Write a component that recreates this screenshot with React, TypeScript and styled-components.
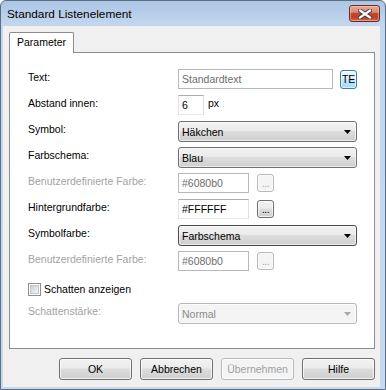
import styled, { createGlobalStyle } from "styled-components";

const GlobalStyle = createGlobalStyle`
    html, body {
        margin: 0;
        padding: 0;
        background: #ffffff;
    }
    * {
        box-sizing: border-box;
    }
`

const UI_FONT = `"Liberation Sans", Arial, sans-serif`

const Window = styled.div`
    width: 386px;
    height: 390px;
    display: flex;
    flex-direction: column;
    border: 1px solid #5b6e86;
    border-radius: 6px 6px 0 0;
    padding: 0 5px 2px 2px;
    background: linear-gradient(to bottom, #abc5e4 0px, #c3d7ee 24px, #c6d9ef 100%);
    font-family: ${UI_FONT};
    overflow: hidden;
`

const TitleBar = styled.div`
    height: 25px;
    flex-shrink: 0;
    display: flex;
    align-items: flex-start;
    justify-content: space-between;
    padding-left: 4px;
`

const Title = styled.div`
    margin-top: 5px;
    font-size: 11.8px;
    line-height: 16px;
    color: #000000;
`

const CloseButton = styled.div`
    width: 31px;
    height: 17px;
    margin-top: 4px;
    border: 1px solid #6e2a20;
    border-radius: 3px;
    background: linear-gradient(to bottom, #e8ab97 0%, #d98672 42%, #c5482e 50%, #bd3f27 75%, #d2694a 100%);
    box-shadow: inset 0 0 0 1px rgba(255, 220, 210, 0.45);
    display: flex;
    align-items: center;
    justify-content: center;
`

const Client = styled.div`
    flex: 1;
    display: flex;
    flex-direction: column;
    background: #f0f0f0;
    padding: 6px 5px 7px 6px;
`

const TabStrip = styled.div`
    display: flex;
    height: 20px;
`

const Tab = styled.div`
    position: relative;
    z-index: 1;
    height: 21px;
    padding: 0 7px;
    border: 1px solid #898c95;
    border-bottom: none;
    border-radius: 2px 2px 0 0;
    background: #ffffff;
    font-size: 10.5px;
    line-height: 19px;
    color: #000000;
`

const TabPanel = styled.div`
    height: 297px;
    border: 1px solid #898c95;
    background: #ffffff;
    padding: 16px 17px 0 18px;
`

const FormGrid = styled.div`
    display: grid;
    grid-template-columns: 150px 179px;
    grid-auto-rows: 20px;
    row-gap: 6px;
`

const Label = styled.div<{ $disabled?: boolean }>`
    align-self: start;
    padding-top: 2px;
    font-size: 10.5px;
    line-height: 13px;
    white-space: nowrap;
    color: ${p => (p.$disabled ? "#a3a3a3" : "#000000")};
`

const FieldRow = styled.div<{ $gap: number }>`
    display: flex;
    align-items: flex-start;
    gap: ${p => p.$gap}px;
`

const TextBox = styled.div<{ $width: number; $disabled?: boolean }>`
    width: ${p => p.$width}px;
    height: 20px;
    border: 1px solid;
    border-color: ${p => (p.$disabled ? "#b5b9bd" : "#abadb3 #dbdfe6 #e3e9ef #e2e3ea")};
    background: #ffffff;
    padding-left: 3px;
    font-size: 10.5px;
    line-height: 18px;
    white-space: nowrap;
    overflow: hidden;
    color: ${p => (p.$disabled ? "#6d6d6d" : "#000000")};
`

const Unit = styled.div`
    padding-top: 2px;
    font-size: 10.5px;
    line-height: 13px;
    color: #000000;
`

const SmallButton = styled.div<{ $disabled?: boolean }>`
    width: 17px;
    height: 18px;
    margin-top: 1px;
    border: 1px solid ${p => (p.$disabled ? "#b5b9bd" : "#707070")};
    border-radius: 3px;
    background: ${p =>
        p.$disabled
            ? "#f4f4f4"
            : "linear-gradient(to bottom, #f2f2f2 0%, #ebebeb 45%, #dddddd 50%, #cfcfcf 100%)"};
    box-shadow: inset 0 0 0 1px rgba(255, 255, 255, 0.7);
    font-size: 10px;
    line-height: 17px;
    text-align: center;
    letter-spacing: -0.5px;
    color: ${p => (p.$disabled ? "#a0a0a0" : "#000000")};
`

const TEButton = styled.div`
    width: 17px;
    height: 19px;
    margin-top: 1px;
    border: 1px solid #3c7fb1;
    border-radius: 3px;
    background: linear-gradient(to bottom, #eaf6fd 0%, #d9f0fc 45%, #bee6fd 50%, #a7d9f5 100%);
    box-shadow: inset 0 0 0 1px rgba(255, 255, 255, 0.6);
    font-size: 10.5px;
    line-height: 17px;
    text-align: center;
    letter-spacing: -0.3px;
    color: #000000;
`

const Select = styled.div<{ $disabled?: boolean; $focused?: boolean }>`
    height: 21px;
    display: flex;
    align-items: center;
    justify-content: space-between;
    padding: 0 5px 0 3px;
    border: 1px solid ${p => (p.$disabled ? "#b5b9bd" : p.$focused ? "#4a4a4a" : "#707070")};
    border-radius: 3px;
    background: ${p =>
        p.$disabled
            ? "#f4f4f4"
            : "linear-gradient(to bottom, #f2f2f2 0%, #ebebeb 45%, #dddddd 50%, #cfcfcf 100%)"};
    box-shadow: inset 0 0 0 1px rgba(255, 255, 255, 0.6);
    font-size: 10.5px;
    color: ${p => (p.$disabled ? "#8a8a8a" : "#000000")};
`

const CheckRow = styled.div`
    grid-column: 1 / -1;
    display: flex;
    align-items: center;
    gap: 3px;
    margin-top: 6px;
    height: 13px;
`

const CheckBox = styled.div`
    width: 13px;
    height: 13px;
    border: 1px solid #8e8f8f;
    background: #ffffff;
    padding: 1px;
`

const CheckInner = styled.div`
    width: 100%;
    height: 100%;
    border: 1px solid #c3c7cc;
    background: linear-gradient(135deg, #cbcfd5 0%, #e4e6e9 60%, #f6f6f6 100%);
`

const CheckLabel = styled.div`
    font-size: 10.5px;
    line-height: 13px;
    color: #000000;
`

const ButtonBar = styled.div`
    display: flex;
    justify-content: flex-end;
    gap: 8px;
    margin-top: 9px;
`

const DialogButton = styled.div<{ $disabled?: boolean }>`
    width: 73px;
    height: 22px;
    border: 1px solid ${p => (p.$disabled ? "#b5b9bd" : "#707070")};
    border-radius: 3px;
    background: ${p =>
        p.$disabled
            ? "#f4f4f4"
            : "linear-gradient(to bottom, #f2f2f2 0%, #ebebeb 45%, #dddddd 50%, #cfcfcf 100%)"};
    box-shadow: inset 0 0 0 1px rgba(255, 255, 255, 0.7);
    font-size: 10.5px;
    line-height: 20px;
    text-align: center;
    color: ${p => (p.$disabled ? "#a0a0a0" : "#000000")};
`

const Arrow = ({ color }: { color: string }) => (
    <svg width="7" height="4" viewBox="0 0 7 4">
        <path d="M0 0H7L3.5 4Z" fill={color} />
    </svg>
)

const CloseGlyph = () => (
    <svg width="14" height="10" viewBox="0 0 14 10">
        <path d="M2 1.5L12 8.5M12 1.5L2 8.5" stroke="#4b3b3b" strokeWidth="4.2" strokeLinecap="square" />
        <path d="M2 1.5L12 8.5M12 1.5L2 8.5" stroke="#ffffff" strokeWidth="2.2" strokeLinecap="square" />
    </svg>
)

export default function App() {
    return (
        <>
            <GlobalStyle />
            <Window>
                <TitleBar>
                    <Title>Standard Listenelement</Title>
                    <CloseButton>
                        <CloseGlyph />
                    </CloseButton>
                </TitleBar>
                <Client>
                    <TabStrip>
                        <Tab>Parameter</Tab>
                    </TabStrip>
                    <TabPanel>
                        <FormGrid>
                            <Label>Text:</Label>
                            <FieldRow $gap={7}>
                                <TextBox $width={155} $disabled>Standardtext</TextBox>
                                <TEButton>TE</TEButton>
                            </FieldRow>

                            <Label>Abstand innen:</Label>
                            <FieldRow $gap={4}>
                                <TextBox $width={26}>6</TextBox>
                                <Unit>px</Unit>
                            </FieldRow>

                            <Label>Symbol:</Label>
                            <Select>
                                <span>Häkchen</span>
                                <Arrow color="#000000" />
                            </Select>

                            <Label>Farbschema:</Label>
                            <Select>
                                <span>Blau</span>
                                <Arrow color="#000000" />
                            </Select>

                            <Label $disabled>Benutzerdefinierte Farbe:</Label>
                            <FieldRow $gap={8}>
                                <TextBox $width={71} $disabled>#6080b0</TextBox>
                                <SmallButton $disabled>...</SmallButton>
                            </FieldRow>

                            <Label>Hintergrundfarbe:</Label>
                            <FieldRow $gap={8}>
                                <TextBox $width={71}>#FFFFFF</TextBox>
                                <SmallButton>...</SmallButton>
                            </FieldRow>

                            <Label>Symbolfarbe:</Label>
                            <Select $focused>
                                <span>Farbschema</span>
                                <Arrow color="#000000" />
                            </Select>

                            <Label $disabled>Benutzerdefinierte Farbe:</Label>
                            <FieldRow $gap={8}>
                                <TextBox $width={71} $disabled>#6080b0</TextBox>
                                <SmallButton $disabled>...</SmallButton>
                            </FieldRow>

                            <CheckRow>
                                <CheckBox>
                                    <CheckInner />
                                </CheckBox>
                                <CheckLabel>Schatten anzeigen</CheckLabel>
                            </CheckRow>

                            <Label $disabled>Schattenstärke:</Label>
                            <Select $disabled>
                                <span>Normal</span>
                                <Arrow color="#a8a8a8" />
                            </Select>
                        </FormGrid>
                    </TabPanel>
                    <ButtonBar>
                        <DialogButton>OK</DialogButton>
                        <DialogButton>Abbrechen</DialogButton>
                        <DialogButton $disabled>Übernehmen</DialogButton>
                        <DialogButton>Hilfe</DialogButton>
                    </ButtonBar>
                </Client>
            </Window>
        </>
    )
}
